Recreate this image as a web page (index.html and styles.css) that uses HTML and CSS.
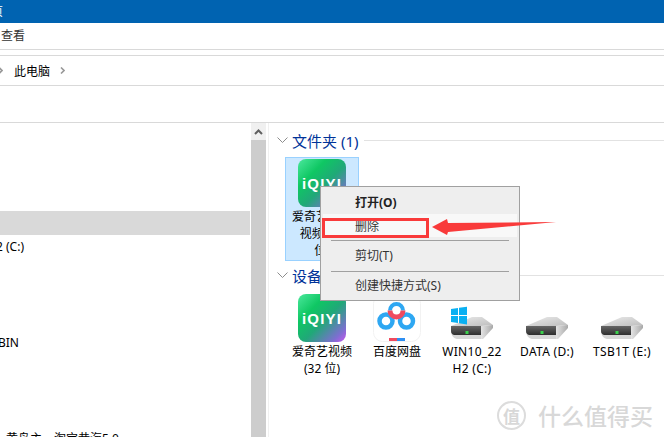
FILE: index.html
```html
<!DOCTYPE html>
<html lang="zh-CN">
<head>
    <meta charset="UTF-8">
    <title>此电脑</title>
    <link rel="stylesheet" href="styles.css">
</head>
<body>
    <div class="title-bar"><span class="title-text">页</span></div>
    <div class="menu-bar"><span class="menu-text">查看</span></div>
    <div class="address-bar">
        <svg class="crumb crumb-first" width="5" height="7" viewBox="0 0 5 7"><path d="M1 0.5 L4 3.5 L1 6.5" fill="none" stroke="#999" stroke-width="1.6"/></svg>
        <span class="crumb-text">此电脑</span>
        <svg class="crumb" width="5" height="7" viewBox="0 0 5 7"><path d="M1 0.5 L4 3.5 L1 6.5" fill="none" stroke="#999" stroke-width="1.6"/></svg>
    </div>
    <div class="tool-bar"></div>

    <div class="main">
        <div class="sidebar">
            <div class="side-row"></div>
            <div class="side-row"></div>
            <div class="side-row"></div>
            <div class="side-row selected"></div>
            <div class="side-row"><span class="side-text side-drive">2 (C:)</span></div>
            <div class="side-row"></div>
            <div class="side-row"></div>
            <div class="side-row"></div>
            <div class="side-row"><span class="side-text side-bin">BIN</span></div>
            <div class="side-row"></div>
            <div class="side-row"></div>
            <div class="side-row"></div>
            <div class="side-row"><span class="side-text side-cut">黄鸟主、淘宝巷海5.0</span></div>
        </div>
        <div class="scrollbar">
            <div class="scroll-btn"><svg width="9" height="6" viewBox="0 0 9 6"><path d="M1 5 L4.500 1.500 L8 5" fill="none" stroke="#606060" stroke-width="2"/></svg></div>
            <div class="scroll-thumb"></div>
        </div>
        <div class="content">
            <div class="group-head">
                <svg width="11" height="6" viewBox="0 0 11 6"><path d="M0.500 0.500 L5.500 5.500 L10.500 0.500" fill="none" stroke="#8c8c8c"/></svg>
                <span class="group-name">文件夹 (1)</span>
                <span class="group-line"></span>
            </div>
            <div class="tiles">
                <div class="tile tile-selected">
                    <div class="iqiyi"><span>iQIYI</span></div>
                    <div class="tile-label">爱奇艺视频<br>视频 (32<br>位)</div>
                </div>
            </div>
            <div class="group-head group-second">
                <svg width="11" height="6" viewBox="0 0 11 6"><path d="M0.500 0.500 L5.500 5.500 L10.500 0.500" fill="none" stroke="#8c8c8c"/></svg>
                <span class="group-name">设备和驱动器 (5)</span>
                <span class="group-line"></span>
            </div>
            <div class="tiles">
                <div class="tile">
                    <div class="iqiyi"><span>iQIYI</span></div>
                    <div class="tile-label">爱奇艺视频<br>(32 位)</div>
                </div>
                <div class="tile">
                    <svg class="app-icon" width="48" height="48" viewBox="0 0 48 48">
                        <rect x="0.500" y="0.500" width="47" height="47" rx="9" fill="#fff" stroke="#f2f2f2"/>
                        <circle cx="13" cy="27" r="6.500" fill="none" stroke="#2ea7f2" stroke-width="4.500"/>
                        <circle cx="33.500" cy="27" r="6.500" fill="none" stroke="#2ea7f2" stroke-width="4.500"/>
                        <path d="M17 16.500 A6.500 6.500 0 0 1 30 16.500" fill="none" stroke="#2ea7f2" stroke-width="4"/>
                        <path d="M17 16.500 A6.500 6.500 0 0 0 30 16.500" fill="none" stroke="#ef4a5f" stroke-width="5"/>
                        <rect x="16" y="44" width="8" height="3" fill="#ef4a5f"/>
                        <rect x="24" y="44" width="8" height="3" fill="#2e8ff2"/>
                    </svg>
                    <div class="tile-label">百度网盘</div>
                </div>
                <div class="tile">
                    <svg class="drive" width="48" height="48" viewBox="0 0 48 48">
                        <use href="#disk"/>
                        <g fill="#0ab0f2">
                            <path d="M3 15 L10 14 V21 H3Z"/><path d="M11 13.800 L19 12.800 V21 H11Z"/>
                            <path d="M3 22 H10 V29 L3 28Z"/><path d="M11 22 H19 V30.500 L11 29.200Z"/>
                        </g>
                    </svg>
                    <div class="tile-label latin">WIN10_22<br>H2 (C:)</div>
                </div>
                <div class="tile">
                    <svg class="drive" width="48" height="48" viewBox="0 0 48 48"><use href="#disk"/></svg>
                    <div class="tile-label latin">DATA (D:)</div>
                </div>
                <div class="tile">
                    <svg class="drive" width="48" height="48" viewBox="0 0 48 48"><use href="#disk"/></svg>
                    <div class="tile-label latin">TSB1T (E:)</div>
                </div>
            </div>
        </div>
    </div>

    <!-- right click menu, lies over the tiles -->
    <div class="context-menu">
        <div class="menu-item menu-bold">打开(O)</div>
        <div class="menu-item menu-hover">删除</div>
        <div class="menu-sep"></div>
        <div class="menu-item">剪切(T)</div>
        <div class="menu-sep"></div>
        <div class="menu-item menu-last">创建快捷方式(S)</div>
    </div>

    <div class="red-box"></div>
    <svg class="red-arrow" width="128" height="22" viewBox="0 0 128 22">
        <path d="M2 11 L17 3 L18 7 L126 6 L18 16 L17 19 Z" fill="#f93a3a"/>
    </svg>

    <div class="watermark">
        <span class="mark-circle">值</span>
        <span class="mark-text">什么值得买</span>
    </div>

    <svg width="0" height="0" class="defs">
        <defs>
            <linearGradient id="disk-top" x1="0" y1="0" x2="1" y2="1">
                <stop offset="0" stop-color="#ececec"/>
                <stop offset="1" stop-color="#bdbdbd"/>
            </linearGradient>
            <linearGradient id="disk-front" x1="0" y1="0" x2="0" y2="1">
                <stop offset="0" stop-color="#666"/>
                <stop offset="1" stop-color="#2e2e2e"/>
            </linearGradient>
            <linearGradient id="disk-side" x1="0" y1="0" x2="1" y2="0">
                <stop offset="0" stop-color="#e4e4e4"/>
                <stop offset="1" stop-color="#a8a8a8"/>
            </linearGradient>
            <g id="disk">
                <path d="M3 32 L24 23 L34 23 L45 31 L33 32Z" fill="url(#disk-top)"/>
                <path d="M33 32 L45 31 V34 L35 45 H33Z" fill="url(#disk-side)"/>
                <path d="M3 37 L6 41 H33 V45 H9 Q4 44 3 38Z" fill="#d6d6d6"/>
                <path d="M3 32 H33 V41 H6 Q3 40 3 37Z" fill="url(#disk-front)"/>
                <rect x="17.500" y="37" width="3" height="3" fill="#38d04a"/>
            </g>
        </defs>
    </svg>
</body>
</html>
```

FILE: styles.css
```css
html, body {
    margin: 0;
    height: 100%;
}

body {
    width: 664px;
    height: 437px;
    position: relative;
    overflow: hidden;
    background: #fff;
    font-family: "Noto Sans", "Noto Sans CJK SC", sans-serif;
    font-size: 12px;
    color: #000;
    display: flex;
    flex-direction: column;
}

.title-bar {
    height: 23px;
    flex: none;
    background: #0063b1;
    color: #fff;
    overflow: hidden;
    line-height: 23px;
}

.title-text {
    margin-left: -9px;
}

.menu-bar {
    height: 26px;
    flex: none;
    line-height: 25px;
    color: #333;
    padding-left: 1px;
    border-bottom: 1px solid #d9d9d9;
}

.address-bar {
    height: 29px;
    flex: none;
    margin-top: 5px;
    border-top: 1px solid #d9d9d9;
    border-bottom: 1px solid #d9d9d9;
    display: flex;
    align-items: center;
}

.crumb-first {
    margin-left: -2px;
}

.crumb-text {
    margin: 0 10px 0 11px;
}

.tool-bar {
    height: 36px;
    flex: none;
    border-bottom: 1px solid #d9d9d9;
}

.main {
    flex: 1;
    min-height: 0;
    display: flex;
}

.sidebar {
    width: 250px;
    flex: none;
    padding-top: 16px;
    overflow: hidden;
}

.side-row {
    height: 24px;
    line-height: 24px;
    overflow: hidden;
}

.side-row.selected {
    background: #d9d9d9;
}

.side-drive {
    margin-left: -4px;
    display: inline-block;
}

.side-bin {
    margin-left: -2px;
    display: inline-block;
}

.side-cut {
    margin-left: 6px;
}

.scrollbar {
    width: 15px;
    margin: 0 2px 0 1px;
    flex: none;
    display: flex;
    flex-direction: column;
    background: #f0f0f0;
}

.scroll-btn {
    height: 17px;
    flex: none;
    background: #f0f0f0;
    display: flex;
    align-items: center;
    justify-content: center;
}

.scroll-thumb {
    flex: 1;
    background: #cdcdcd;
}

.content {
    flex: 1;
    min-width: 0;
    border-left: 1px solid #f0f0f0;
    padding: 9px 0 0 8px;
}

.group-head {
    height: 16px;
    display: flex;
    align-items: center;
    gap: 4px;
}

.group-name {
    color: #003399;
    font-size: 15px;
    white-space: nowrap;
}

.group-line {
    flex: 1;
    height: 1px;
    margin-left: 2px;
    background: #e2e2e2;
}

.group-second {
    margin-top: 6px;
}

.tiles {
    display: flex;
    margin-top: 9px;
    margin-left: 8px;
}

.tile {
    width: 74px;
    flex: none;
    margin-right: 1px;
    display: flex;
    flex-direction: column;
    align-items: center;
    padding-top: 1px;
    box-sizing: border-box;
    height: 104px;
    border: 1px solid transparent;
}

.tile-selected {
    background: #cce8ff;
    border-color: #99d1ff;
}

.iqiyi {
    width: 48px;
    height: 48px;
    flex: none;
    border-radius: 8px;
    background: linear-gradient(135deg, #4be89c 0%, #0fc763 30%, #20a878 55%, #7c6fd0 85%, #c955f0 100%);
    display: flex;
    align-items: center;
    justify-content: center;
    color: #fff;
    font-family: "Liberation Sans", sans-serif;
    font-weight: 700;
    font-size: 15px;
    letter-spacing: 1.2px;
}

.tile-label {
    margin-top: 1px;
    line-height: 17px;
    text-align: center;
    white-space: nowrap;
}

.latin {
    letter-spacing: 0.3px;
}

.defs {
    position: absolute;
}

.context-menu {
    position: absolute;
    left: 320px;
    top: 186px;
    width: 200px;
    height: 115px;
    box-sizing: border-box;
    padding: 2px;
    background: #eeeeee;
    border: 1px solid #a0a0a0;
    color: #333;
}

.menu-item {
    height: 24px;
    line-height: 24px;
    padding-left: 32px;
    white-space: nowrap;
}

.menu-bold {
    font-weight: 700;
    color: #222;
    height: 25px;
    line-height: 28px;
}

.menu-hover {
    background: #f8f8f8;
    height: 23px;
    line-height: 25px;
}

.menu-last {
    height: 22px;
    line-height: 22px;
}

.menu-sep {
    height: 1px;
    margin: 3px 8px 3px 8px;
    background: #a0a0a0;
}

.red-box {
    position: absolute;
    left: 322px;
    top: 218px;
    width: 107px;
    height: 20px;
    box-sizing: border-box;
    border: 3px solid #f93a3a;
}

.red-arrow {
    position: absolute;
    left: 430px;
    top: 216px;
}

.watermark {
    position: absolute;
    left: 497px;
    top: 398px;
    display: flex;
    align-items: center;
    gap: 12px;
    color: #d8d8d8;
    white-space: nowrap;
}

.mark-circle {
    width: 25px;
    height: 25px;
    border: 2px solid #dcdcdc;
    border-radius: 50%;
    display: flex;
    align-items: center;
    justify-content: center;
    font-size: 17px;
    font-weight: 700;
}

.mark-text {
    font-size: 23px;
    font-weight: 500;
}
```
